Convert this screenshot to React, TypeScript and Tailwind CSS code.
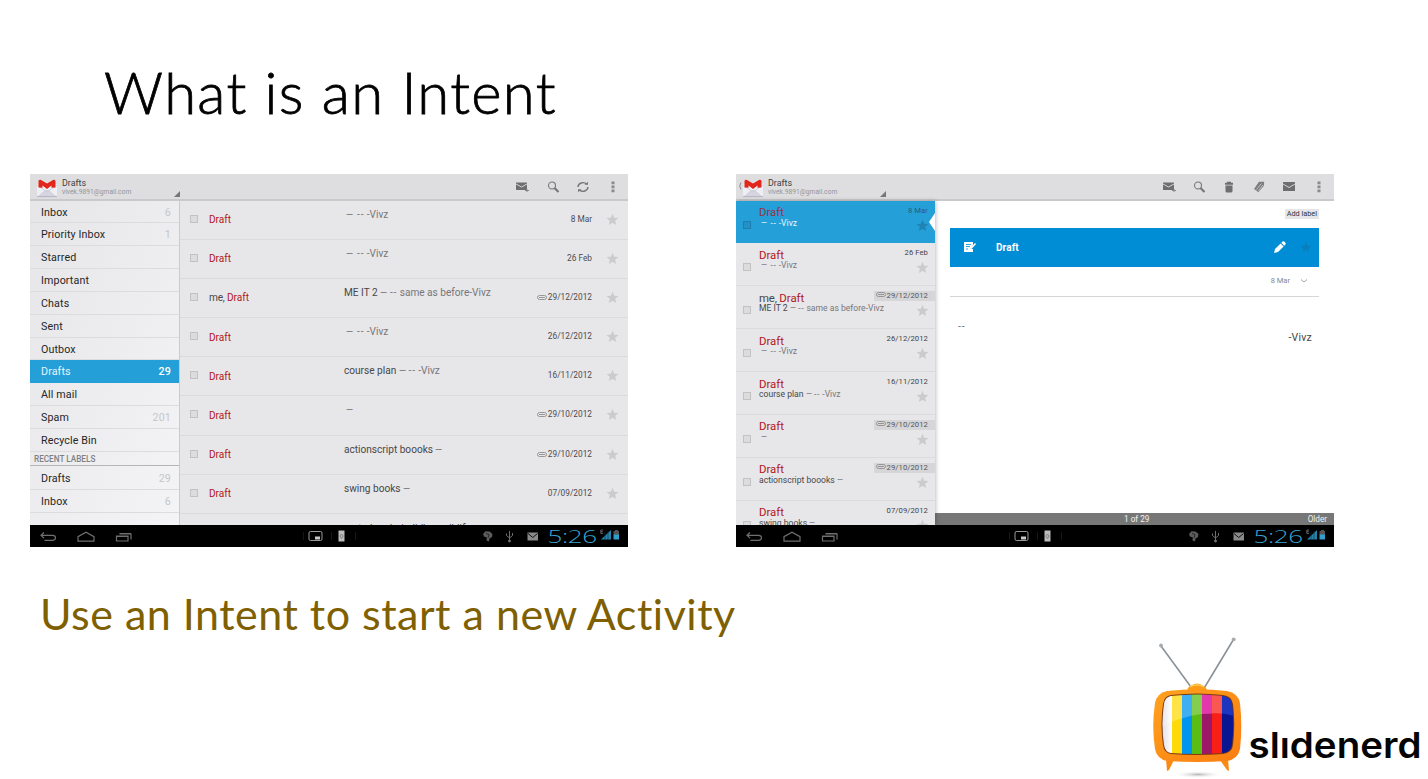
import React from "react";

type P = { className?: string };

const Star = ({ className = "" }: P) => (
  <svg viewBox="0 0 24 24" className={"block size-[13px] shrink-0 " + className} fill="currentColor">
    <path d="M12 1.500l3 7.300 8 .6-6.100 5.100 1.900 7.700L12 18l-6.800 4.200 1.900-7.700L1 9.400l8-.6z" />
  </svg>
);

const Check = ({ className = "border-[#c2c2c2] bg-[#dcdcdc]" }: P) => (
  <span className={"block size-2 shrink-0 border " + className} />
);

const Clip = ({ className = "" }: P) => (
  <svg viewBox="0 0 20 10" className={"block h-[5px] w-[10px] shrink-0 " + className} fill="none" stroke="#8c8c8c" strokeWidth="1.800">
    <rect x="1" y="1" width="18" height="8" rx="4" />
    <path d="M16 5H4" />
  </svg>
);

const Gmail = ({ className = "" }: P) => (
  <svg viewBox="0 0 22 20" className={"block h-5 w-[22px] shrink-0 " + className}>
    <path d="M1 6h20v13H1z" fill="#eeeef4" />
    <path d="M1 19l8-7h4l8 7z" fill="#d5d5e0" />
    <path d="M1 18.600h20" stroke="#b4b4c4" strokeWidth="1" />
    <path d="M1 7l10 7 10-7" stroke="#c9c9d4" strokeWidth=".8" fill="none" />
    <path d="M2.500 9.500V3.600c0-1.500 1-2.300 2.500-1.500L11 5.600l6-3.500c1.500-.8 2.500 0 2.500 1.500v5.900l-4 .3V7.500L11 11 6.500 7.500v2.300z" fill="#e3261b" />
  </svg>
);

const MailPlus = () => (
  <svg viewBox="0 0 16 14" className="block h-[14px] w-4">
    <path d="M1 2.500h11v7.500H1z" fill="#6e6e70" />
    <path d="M1 4l5.500 3L12 4" stroke="#dedee0" strokeWidth=".9" fill="none" />
    <path d="M10 10.500h4M12 9v3" stroke="#88888b" strokeWidth="1" />
  </svg>
);

const Search = () => (
  <svg viewBox="0 0 14 14" className="block size-[14px]" fill="none" stroke="#77777a">
    <circle cx="5" cy="5.500" r="3.500" strokeWidth="1.100" />
    <path d="M7.500 8l4 4" strokeWidth="2.200" />
  </svg>
);

const Refresh = () => (
  <svg viewBox="0 0 14 14" className="block size-[14px]" fill="none" stroke="#77777a" strokeWidth="1.400">
    <path d="M2 7a5 4.500 0 0 1 8.500-3M12 7a5 4.500 0 0 1-8.500 3" />
    <path d="M8.500 4.800H12V1.800z M5.500 9.200H2v3z" fill="#77777a" stroke="none" />
  </svg>
);

const Dots = () => (
  <svg viewBox="0 0 4 12" className="block h-3 w-1" fill="#8a8a8d">
    <path d="M.5 .5h3v2.800h-3zM.5 4.500h3v2.800h-3zM.5 8.500h3v2.800h-3z" />
  </svg>
);

const Trash = () => (
  <svg viewBox="0 0 10 12" className="block h-3 w-[10px]" fill="#6e6e70">
    <path d="M3 .8h4v1h2v2H1v-2h2zM1.500 4.500h7V10q0 1.500-1.500 1.500H3Q1.500 11.500 1.500 10z" />
  </svg>
);

const Tag = () => (
  <svg viewBox="0 0 12 12" className="block size-3">
    <path d="M6 .8h5.200l-.4 4.200-5.600 6.200-1.500-1.400L1 8z" fill="#7c7c7f" />
    <path d="M8.500 2.500L3.500 8.500M10 4L5.300 9.800" stroke="#dedee0" strokeWidth=".7" />
  </svg>
);

const Mail = () => (
  <svg viewBox="0 0 12 9" className="block h-[9px] w-3">
    <path d="M0 0h12v9H0z" fill="#6e6e70" />
    <path d="M0 2l6 3.500L12 2" stroke="#dedee0" strokeWidth=".9" fill="none" />
  </svg>
);

const Title = ({ back = false }: { back?: boolean }) => (
  <>
    {back && (
      <svg viewBox="0 0 4 8" className="ml-[2px] mt-[4px] block h-2 w-1" fill="none" stroke="#8a8a8a" strokeWidth="1">
        <path d="M3 .5Q.5 4 3 7.500" />
      </svg>
    )}
    <Gmail className={back ? "" : "ml-[6px]"} />
    <div className="ml-1 w-[112px]">
      <div className="h-[10px] text-[8.900px] leading-[10px] text-[#3f3f3f]">Drafts</div>
      <div className="text-[6.700px] leading-[9px] text-[#959597]">vivek.9891@gmail.com</div>
    </div>
    <svg viewBox="0 0 6 6" className="mt-[13px] block size-[6px]" fill="#77777a">
      <path d="M6 0v6H0z" />
    </svg>
  </>
);

const NavBar = () => (
  <div className="flex h-[22.500px] shrink-0 items-center bg-black">
    <svg viewBox="0 0 110 22" className="block h-[22px] w-[110px] shrink-0" fill="none" stroke="#6f6f6f" strokeWidth="1.200">
      <path d="M14 7.500l-3 2.800 3 2.800M11.500 10.300h11q3 0 3 2.500t-3 2.500h-8" />
      <path d="M48 16.200v-4.500l8-4.500 8 4.500v4.500z" />
      <path d="M86.500 11h11.500v5H86.500zM89.500 9h11.500v5.500" />
      <path d="M86.500 11.500h11.500M89.500 8.500h11.500" />
    </svg>
    <svg viewBox="0 0 60 22" className="ml-[163px] block h-[22px] w-[60px] shrink-0">
      <rect x="6" y="6.500" width="13" height="9" rx="1.500" fill="none" stroke="#9a9a9a" />
      <path d="M12 11.500h5v3h-5z" fill="#c8c8c8" />
      <path d="M.5 7v8M28.500 7v8M52.500 7v8" stroke="#161616" />
      <path d="M35.500 5.500h6v11h-6z" fill="#bdbdbd" />
      <path d="M36.800 11l1.700-2 1.700 2-1.700 2.500z" fill="none" stroke="#777" strokeWidth=".9" />
    </svg>
    <svg viewBox="0 0 66 22" className="ml-[117px] block h-[22px] w-[66px] shrink-0" fill="none" stroke="#6f6f6f">
      <path d="M3 9l2.500-2.800 4 .3L12.500 9l-.5 3-2.500 1.500-.5 3-2.500-1 .3-3L4 11.500z" fill="#5c5c5c" stroke="none" />
      <path d="M6 8.500l3 1-1 3.500" stroke="#222" strokeWidth=".9" />
      <path d="M29.500 6v10M26.500 8.500v2l3 2.500 3-2.500V8" />
      <circle cx="29.500" cy="16" r="1" fill="#777" />
      <path d="M47.500 7.500h10.500v8h-10.500z" fill="#8a8a8a" stroke="none" />
      <path d="M48 8.500l4.700 4 4.800-4" stroke="#111" strokeWidth="1" />
    </svg>
    <div className="w-[54px] shrink-0">
      <div className="w-max origin-left scale-x-[1.450] pl-[1px] font-['Open_Sans'] text-[18px] font-light leading-[22px] tracking-[-0.300px] text-[#39a5d2]">5:26</div>
    </div>
    <svg viewBox="0 0 20 12" className="mb-px block h-3 w-5 shrink-0">
      <path d="M3 1H.8v3.500H3M.8 2.700h2" stroke="#777" fill="none" strokeWidth=".8" />
      <path d="M1 10.500L11 1v9.500z" fill="#2682a8" />
      <path d="M5 3v8M8 2v9" stroke="#0b3444" strokeWidth=".6" />
      <path d="M13.500 2h1.500V1h3v1h1v4h-5.500z" fill="#555" />
      <path d="M13.500 5.500H19v5h-5.500z" fill="#2f9fcb" />
    </svg>
  </div>
);

const folders: [string, string][] = [
  ["Inbox", "6"], ["Priority Inbox", "1"], ["Starred", ""], ["Important", ""], ["Chats", ""], ["Sent", ""],
  ["Outbox", ""], ["Drafts", "29"], ["All mail", ""], ["Spam", "201"], ["Recycle Bin", ""],
];

const Folder = ({ name, count, active = false }: { name: string; count: string; active?: boolean }) => (
  <div
    className={
      "flex h-[22.850px] shrink-0 justify-between border-b pl-[11px] pr-2 text-[10.700px] leading-[23px] tracking-[0.120px] " +
      (active ? "border-[#259fd8] bg-[#259fd8] text-[#e4f4fc]" : "border-[#dcdcde] text-[#262626]")
    }
  >
    <span>{name}</span>
    <span className={active ? "font-medium text-white" : "text-[#c6c6c8]"}>{count}</span>
  </div>
);

type Mailing = { me?: boolean; subject: string; rest: string; date: string; clip?: boolean };
const mails: Mailing[] = [
  { subject: "", rest: "— -- -Vivz", date: "8 Mar" },
  { subject: "", rest: "— -- -Vivz", date: "26 Feb" },
  { me: true, subject: "ME IT 2", rest: "— -- same as before-Vivz", date: "29/12/2012", clip: true },
  { subject: "", rest: "— -- -Vivz", date: "26/12/2012" },
  { subject: "course plan", rest: "— -- -Vivz", date: "16/11/2012" },
  { subject: "", rest: "—", date: "29/10/2012", clip: true },
  { subject: "actionscript boooks", rest: "—", date: "29/10/2012", clip: true },
  { subject: "swing books", rest: "—", date: "07/09/2012" },
];

const Sender = ({ me }: { me?: boolean }) => (
  <>
    {me && <span className="tracking-[-0.200px] text-[#484848]">me, </span>}
    <span className="text-[#b0191e]">Draft</span>
  </>
);

const Snippet = ({ m }: { m: Mailing }) => {
  const [dash, ...words] = m.rest.split(" ");
  const tail = words.join(" ");
  return (
    <>
      {m.subject ? <span className="text-[#484848]">{m.subject} </span> : <span className="inline-block w-[2px]" />}
      <span className={"inline-block origin-left scale-x-[0.900] " + (m.subject ? "w-[0.720em]" : "w-[0.850em]")}>{dash}</span>
      {tail.startsWith("-- ") && (
        <>
          {" "}
          <span className="tracking-[0.080em]">--</span> {tail.slice(3)}
        </>
      )}
    </>
  );
};

const ListScreen = () => (
  <section className="flex h-[373px] w-[598px] flex-col overflow-hidden bg-[#e7e6e9]">
    <div className="flex h-[26.500px] shrink-0 border-b-2 border-[#c9c9cb] bg-[#dedee0] pt-[4px]">
      <Title />
      <div className="-mt-1 ml-[335px] flex h-[25px] items-center">
        <div className="w-[32px]"><MailPlus /></div>
        <div className="w-[29px]"><Search /></div>
        <div className="w-[35px]"><Refresh /></div>
        <Dots />
      </div>
    </div>
    <div className="flex min-h-0 flex-1">
      <aside className="flex w-[150px] shrink-0 flex-col overflow-hidden border-r border-[#cbcbcd] bg-gradient-to-br from-[#e6e6e8] to-[#f4f4f6]">
        {folders.map(([n, c], i) => (
          <Folder key={n} name={n} count={c} active={i === 7} />
        ))}
        <div className="mb-px h-[14.500px] shrink-0 border-b border-[#b5b5b7] pl-[4px] text-[8.200px] font-medium leading-[15px] text-[#808083]">RECENT LABELS</div>
        <Folder name="Drafts" count="29" />
        <Folder name="Inbox" count="6" />
      </aside>
      <div className="min-w-0 flex-1 overflow-hidden">
        {mails.map((m, i) => (
          <div key={i} className="flex h-[39.200px] items-start border-b border-[#dbdadd]">
            <Check className="ml-[10px] mt-[14px] border-[#c2c2c2] bg-[#dcdcdc]" />
            <div className="ml-[11px] w-[135px] pt-[12.500px] text-[10.100px] leading-[13px]"><Sender me={m.me} /></div>
            <div className="flex-1 whitespace-nowrap pt-[7px] text-[10.100px] leading-[13px] text-[#77777a]"><Snippet m={m} /></div>
            <div className="flex items-center pt-3 text-[8.300px] leading-[13px] text-[#4c4c4e]">
              {m.clip && <Clip className="mr-px" />}{m.date}
            </div>
            <Star className="ml-[14px] mr-[9px] mt-[12px] text-[#cbcbcd]" />
          </div>
        ))}
        <div className="pl-[167px] pt-[8px] text-[10.100px] leading-[13px] text-[#484848]">outsdrasdroindidbaoodblif</div>
      </div>
    </div>
    <NavBar />
  </section>
);

const MessageScreen = () => (
  <section className="flex h-[373px] w-[598px] flex-col overflow-hidden bg-white">
    <div className="flex h-[26.500px] shrink-0 border-b-2 border-[#c9c9cb] bg-[#dedee0] pt-[4px]">
      <Title back />
      <div className="-mt-1 ml-[276px] flex h-[25px] items-center">
        <div className="w-[31px]"><MailPlus /></div>
        <div className="w-[31px]"><Search /></div>
        <div className="w-[29px]"><Trash /></div>
        <div className="w-[30px]"><Tag /></div>
        <div className="w-[34px]"><Mail /></div>
        <Dots />
      </div>
    </div>
    <div className="flex min-h-0 flex-1">
      <div className="relative z-10 w-[199px] shrink-0 overflow-hidden bg-[#e7e6e9] shadow-[1px_0_4px_rgba(0,0,0,0.25)]">
        {mails.map((m, i) => (
          <div
            key={i}
            className={
              "relative flex h-[42.900px] items-start border-b " +
              (i === 0 ? "border-[#259fd8] bg-[#259fd8]" : "border-[#dbdadd]")
            }
          >
            <Check className={"ml-[7px] mt-5 " + (i === 0 ? "border-[#1c7fb0] bg-[#2291c7]" : "border-[#c2c2c2] bg-[#dcdcdc]")} />
            <div className="ml-[8px] whitespace-nowrap pt-[5.500px]">
              <div className={"text-[11.400px] leading-[13px] " + (i === 0 ? "opacity-80" : "")}><Sender me={m.me} /></div>
              <div className={"-mt-[2.500px] text-[8.600px] leading-[12px] " + (i === 0 ? "text-[#e6f6ff]" : "text-[#77777a]")}><Snippet m={m} /></div>
            </div>
            <div
              className={
                "absolute right-0 top-[5px] flex h-[10px] pr-[7px] text-[7.700px] leading-[10px] tracking-[0.050px] " +
                (m.clip ? "bg-[#d6d6d8] pl-[2px] text-[#555]" : i === 0 ? "text-[#2a5c78]" : "text-[#444]")
              }
            >
              {m.clip && <Clip className="mr-px mt-px" />}{m.date}
            </div>
            <Star className={"absolute right-[6px] top-[18px] " + (i === 0 ? "text-[#2083b3]" : "text-[#cbcbcd]")} />
          </div>
        ))}
        <svg viewBox="0 0 6 18" className="absolute right-0 top-3 h-[18px] w-[6px]" fill="#fff"><path d="M6 0v18L0 9z" /></svg>
      </div>
      <div className="flex flex-1 flex-col">
        <div className="flex h-[27.500px] items-center justify-end pr-[15px]">
          <span className="h-[10px] bg-[#e6e6e8] px-[2px] text-[7.300px] leading-[10px] text-[#333]">Add label</span>
        </div>
        <div className="ml-[15px] mr-[15px] flex h-[38.500px] items-center bg-[#008dd5]">
          <svg viewBox="0 0 14 12" className="ml-[13px] block h-3 w-[14px]">
            <path d="M1 1h9v3L7 8h3v3H1z" fill="#fff" />
            <path d="M3 3.500h5M3 5.500h4M3 8h2" stroke="#008dd5" strokeWidth=".8" />
            <path d="M12.500 2.500L7.500 8" stroke="#fff" strokeWidth="1.500" />
          </svg>
          <span className="ml-[19px] flex-1 text-[10px] font-bold tracking-[0.100px] text-white">Draft</span>
          <svg viewBox="0 0 12 12" className="block size-3" fill="#fff">
            <path d="M0 12l1-4 5.600-5.600 3 3L4 11zM7.300 1.700L8.500.5q1-.8 2 .3l.7.7q1 1 .2 2l-1.200 1.200z" />
          </svg>
          <Star className="ml-[14px] mr-[7px] !size-[12px] text-[#0a7fbd]" />
        </div>
        <div className="ml-[15px] mr-[15px] flex h-[30px] items-center justify-end border-b border-[#d6d6d9] text-[7.500px] text-[#88888a]">
          8 Mar
          <svg viewBox="0 0 8 6" className="ml-[10px] mr-[11px] block h-[6px] w-2" fill="none" stroke="#a5a5a5"><path d="M1 1.500L4 4l3-2.500" /></svg>
        </div>
        <div className="flex-1 pl-[23px] pr-[22px] pt-[24px] text-[10.500px] leading-[11px] text-[#444]">
          <div className="tracking-[0.080em] text-[#777]">--</div>
          <div className="text-right tracking-[0.020em]">-Vivz</div>
        </div>
        <div className="flex h-[12px] items-center bg-[#777] pl-[189px] pr-[7px] text-[8.200px] leading-3 text-[#f2f2f2]">
          <span className="flex-1">1 of 29</span><span>Older</span>
        </div>
      </div>
    </div>
    <NavBar />
  </section>
);

const Logo = () => (
  <svg viewBox="1130 630 298 149" className="block h-[149px] w-[298px]">
    <defs>
      <linearGradient id="orange" x1="0" y1="0" x2="1" y2="1">
        <stop offset="0" stopColor="#ffa21f" />
        <stop offset="1" stopColor="#fb7d10" />
      </linearGradient>
      <radialGradient id="shade"><stop offset="0" stopColor="#b5b5b5" /><stop offset="1" stopColor="#fff" stopOpacity="0" /></radialGradient>
      <clipPath id="screen"><path d="M1171 696q26-3 52 0 8 1 9 8 2.500 20 0 41-1 7-9 8-26 2-52 0-6-1-7-8-3-20 0-41 1-7 7-8z" /></clipPath>
      <linearGradient id="white"><stop offset="0" stopColor="#d9d9e2" /><stop offset="1" stopColor="#fff" /></linearGradient>
    </defs>
    <ellipse cx="1198" cy="774.500" rx="25" ry="3.500" fill="url(#shade)" />
    <path d="M1161 646l30 41M1233.500 639.500l-29 48" stroke="#8a9299" strokeWidth="1.600" />
    <circle cx="1161" cy="645.500" r="1.900" fill="#a6abb0" />
    <circle cx="1233.700" cy="639.300" r="1.900" fill="#a6abb0" />
    <path d="M1187 692q0-5 4-6 2-2.500 6-2.500t6 2.500q4 1 4 6z" fill="#fb9b16" />
    <path d="M1190 686.500q7-3 14 0" stroke="#ffcf55" fill="none" strokeWidth="1.500" />
    <path d="M1166 759l8 1-5 10-2 1zM1220 760l8-1 1 12-2-1z" fill="#f98a13" />
    <path d="M1167 691q30-3.500 60 0 11 2 13 12 2.500 23 0 46-2 10-13 12-30 2-60 0-10-2-12-12-3.500-23 0-46 2-10 12-12z" fill="url(#orange)" />
    <path d="M1171 695q26-3 52 0 9 1 10 9 2.500 20 0 41-1 8-10 9-26 2-52 0-7-1-8-9-3-20 0-41 1-8 8-9z" fill="#7b3a13" />
    <g clipPath="url(#screen)">
      <path d="M1160 690h12v70h-12z" fill="url(#white)" />
      <path d="M1172 690h10v70h-10z" fill="#ffda0a" />
      <path d="M1182 690h10v70h-10z" fill="#0095ee" />
      <path d="M1192 690h10v70h-10z" fill="#5bbd13" />
      <path d="M1202 690h10v70h-10z" fill="#9c1768" />
      <path d="M1212 690h10v70h-10z" fill="#f81f16" />
      <path d="M1222 690h12v70h-12z" fill="#0a1592" />
      <path d="M1160 690h62v23.500q-32-2-62 13.500z" fill="#fff" opacity=".25" />
      <path d="M1222 690h12v26q-6-2-12-2.500z" fill="#2b4be0" opacity=".6" />
      <path d="M1202 690h10v23.500q-5 0-10 .5z" fill="#f32db8" opacity=".7" />
    </g>
    <text x="1248.500" y="757.500" textLength="173" lengthAdjust="spacingAndGlyphs" fontFamily="Inter, sans-serif" fontWeight="600" fontSize="35.500" fill="#050505">slıdenerd</text>
  </svg>
);

export default function App() {
  return (
    <main className="flex h-[779px] w-[1428px] flex-col overflow-hidden bg-white font-[Roboto,sans-serif]">
      <h1 className="h-[174px] shrink-0 pl-[104px] pt-[56px] font-[Lato,sans-serif] text-[58px] font-light leading-[72px] text-black">
        <span className="inline-block tracking-[1.300px] [-webkit-text-stroke:0.800px_black]">What is an Intent</span>
      </h1>
      <div className="flex shrink-0 gap-[108px] pl-[30px]">
        <ListScreen />
        <MessageScreen />
      </div>
      <h2 className="h-[83px] shrink-0 pl-[40px] pt-[37px] font-[Lato,sans-serif] text-[43px] leading-[60px] text-[#7f6000]">
        <span className="inline-block tracking-[0.500px]">Use an Intent to start a new Activity</span>
      </h2>
      <div className="flex shrink-0 justify-end"><Logo /></div>
    </main>
  );
}
